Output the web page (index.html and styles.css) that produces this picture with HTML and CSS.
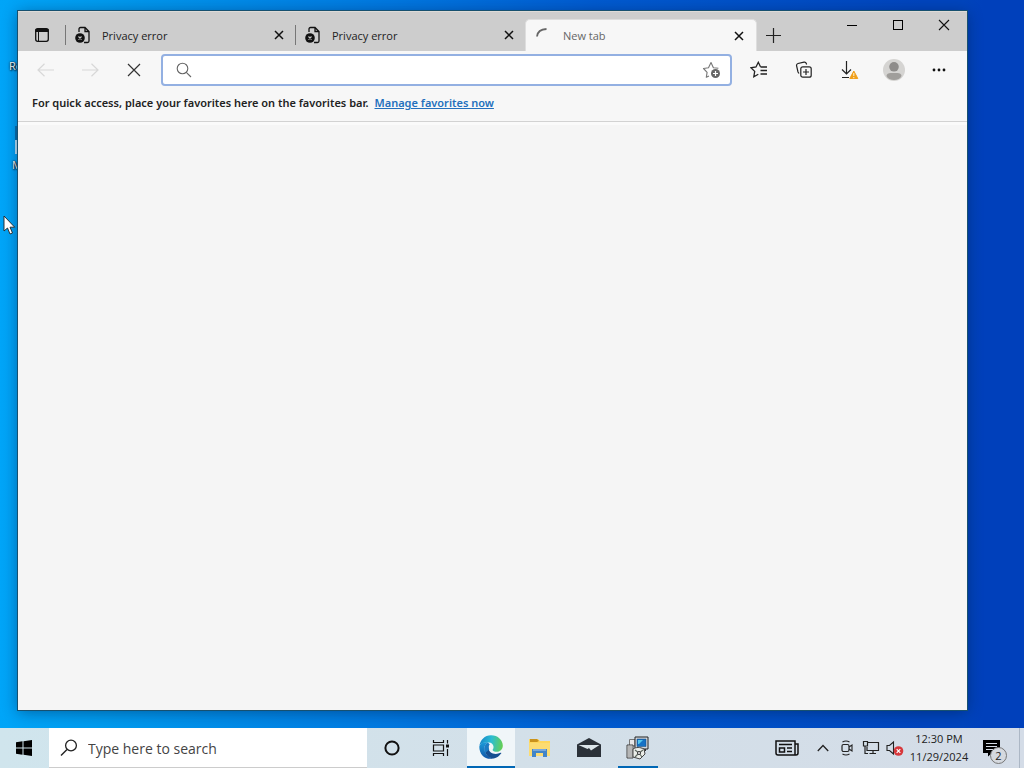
FILE: index.html
```html
<!DOCTYPE html>
<html lang="en">
<head>
<meta charset="utf-8">
<title>New tab</title>
<link rel="stylesheet" href="styles.css">
</head>
<body>
<div class="screen">
  <main class="desktop">
    <span class="shortcut shortcut-recycle">Recycle Bin</span>
    <span class="shortcut-icon"></span>
    <span class="shortcut shortcut-edge">Microsoft Edge</span>

    <section class="window">
      <header class="titlebar">
        <button class="tab-actions" aria-label="Tab actions">
          <svg width="16" height="16" viewBox="0 0 16 16"><rect x="1.7" y="1.7" width="12.6" height="12.6" rx="2" fill="none" stroke="#111" stroke-width="1.3"/><path d="M1.5 2h13v3H5v9.500H4V5H1.500z" fill="#111"/></svg>
        </button>
        <div class="tab">
          <svg width="18" height="18" viewBox="0 0 18 18"><path d="M5 6V3a1.500 1.500 0 0 1 1.500-1.500H11L15 5.500V15a1.500 1.500 0 0 1-1.500 1.500H10M11 1.500V5.500H15" fill="none" stroke="#111" stroke-width="1.3"/><circle cx="6" cy="12" r="4.800" fill="#111"/><path d="M4.500 10.500l3 3M7.500 10.500l-3 3" stroke="#ccc" stroke-width="1.100"/></svg>
          <span class="tab-title">Privacy error</span>
          <button class="tab-close" aria-label="Close tab"><svg width="10" height="10" viewBox="0 0 10 10"><path d="M1 1l8 8M9 1L1 9" stroke="#111" stroke-width="1.500"/></svg></button>
        </div>
        <div class="tab">
          <svg width="18" height="18" viewBox="0 0 18 18"><path d="M5 6V3a1.500 1.500 0 0 1 1.500-1.500H11L15 5.500V15a1.500 1.500 0 0 1-1.500 1.500H10M11 1.500V5.500H15" fill="none" stroke="#111" stroke-width="1.3"/><circle cx="6" cy="12" r="4.800" fill="#111"/><path d="M4.500 10.500l3 3M7.500 10.500l-3 3" stroke="#ccc" stroke-width="1.100"/></svg>
          <span class="tab-title">Privacy error</span>
          <button class="tab-close" aria-label="Close tab"><svg width="10" height="10" viewBox="0 0 10 10"><path d="M1 1l8 8M9 1L1 9" stroke="#111" stroke-width="1.500"/></svg></button>
        </div>
        <div class="tab tab-active">
          <svg width="18" height="18" viewBox="0 0 18 18"><path d="M2 9.500C2.500 5 6 2.200 11.500 2" fill="none" stroke="#666" stroke-width="1.800"/></svg>
          <span class="tab-title">New tab</span>
          <button class="tab-close" aria-label="Close tab"><svg width="10" height="10" viewBox="0 0 10 10"><path d="M1 1l8 8M9 1L1 9" stroke="#111" stroke-width="1.500"/></svg></button>
        </div>
        <button class="new-tab" aria-label="New tab"><svg width="15" height="15" viewBox="0 0 15 15"><path d="M7.500 0v15M0 7.500h15" stroke="#222" stroke-width="1.200"/></svg></button>
        <div class="window-controls">
          <button aria-label="Minimize"><svg width="12" height="12" viewBox="0 0 12 12"><path d="M1 6.500h10" stroke="#000"/></svg></button>
          <button aria-label="Maximize"><svg width="12" height="12" viewBox="0 0 12 12"><rect x="1.500" y="1.500" width="9" height="9" fill="none" stroke="#000"/></svg></button>
          <button aria-label="Close"><svg width="12" height="12" viewBox="0 0 12 12"><path d="M1 1l10 10M11 1L1 11" stroke="#111" stroke-width="1.100"/></svg></button>
        </div>
      </header>

      <nav class="toolbar">
        <button class="nav-button" aria-label="Back" disabled><svg width="18" height="14" viewBox="0 0 18 14"><path d="M17 7H1M7.500 .8L1 7l6.500 6.200" fill="none" stroke="#d8d8d8" stroke-width="1.200"/></svg></button>
        <button class="nav-button" aria-label="Forward" disabled><svg width="18" height="14" viewBox="0 0 18 14"><path d="M1 7h16M10.500 .8L17 7l-6.500 6.200" fill="none" stroke="#d8d8d8" stroke-width="1.200"/></svg></button>
        <button class="nav-button" aria-label="Stop loading"><svg width="14" height="14" viewBox="0 0 14 14"><path d="M1 1l12 12M13 1L1 13" stroke="#333" stroke-width="1.200"/></svg></button>
        <div class="address">
          <svg width="16" height="16" viewBox="0 0 16 16"><circle cx="6.500" cy="6.500" r="5.300" fill="none" stroke="#666" stroke-width="1.100"/><path d="M10.300 10.300L15 15" stroke="#666" stroke-width="1.100"/></svg>
          <input type="text" aria-label="Address and search bar">
          <button aria-label="Add this page to favorites"><svg width="20" height="18" viewBox="0 0 20 18"><path d="M7 15l-2.700 1.300.8-5L1.500 7.500l5-.8L9 1.500l2.400 5.200 5 .6" fill="none" stroke="#777" stroke-width="1.100" stroke-linejoin="round"/><circle cx="13.500" cy="12.500" r="4.500" fill="#666"/><path d="M13.500 10v5M11 12.500h5" stroke="#fff" stroke-width="1.200"/></svg></button>
        </div>
        <button class="tool-button" aria-label="Favorites"><svg width="18" height="18" viewBox="0 0 18 18"><path d="M10.500 5.800L8.300 1.300 6 6 1 6.800l3.700 3.600-.9 5.300 4.500-2.400M10.500 6H17M10.500 9.500H17M10.500 13H17" fill="none" stroke="#222" stroke-width="1.300"/></svg></button>
        <button class="tool-button" aria-label="Collections"><svg width="18" height="18" viewBox="0 0 18 18"><path d="M4 12.500L3 11 1.500 4.500a2 2 0 0 1 1.500-2l6-1.300a2 2 0 0 1 2.300 1.300l.3 1" fill="none" stroke="#222" stroke-width="1.200"/><rect x="5.800" y="5.800" width="10.400" height="10.400" rx="2" fill="none" stroke="#222" stroke-width="1.200"/><path d="M11 8v6M8 11h6" stroke="#222" stroke-width="1.200"/></svg></button>
        <button class="tool-button" aria-label="Downloads"><svg width="20" height="20" viewBox="0 0 20 20"><path d="M7.500 1v13M3 9.500l4.500 4.500L12 9.500M3 17.500h7" fill="none" stroke="#222" stroke-width="1.200"/><path d="M14.800 11l4 7.500h-8z" fill="#f0a01c" stroke="#f0a01c" stroke-linejoin="round"/><path d="M14.800 13v3M14.800 17v1.200" stroke="#fff3d8"/></svg></button>
        <button class="tool-button" aria-label="Profile"><svg width="22" height="22" viewBox="0 0 22 22"><circle cx="11" cy="11" r="11" fill="#d5d4d2"/><circle cx="11" cy="7.800" r="4.800" fill="#8e8c8a"/><path d="M3.500 17c0-2 2-3 4-3h7c2 0 4 1 4 3-1 2.500-4 4-7.500 4s-6.500-1.500-7.500-4z" fill="#a09e9b"/></svg></button>
        <button class="tool-button" aria-label="Settings and more"><svg width="14" height="4" viewBox="0 0 14 4"><g fill="#111"><circle cx="2" cy="2" r="1.400"/><circle cx="7" cy="2" r="1.400"/><circle cx="12" cy="2" r="1.400"/></g></svg></button>
      </nav>

      <div class="favorites-bar">
        <span>For quick access, place your favorites here on the favorites bar.</span>
        <a href="#">Manage favorites now</a>
      </div>
      <div class="page"></div>
    </section>

    <svg class="cursor" width="13" height="20" viewBox="0 0 13 20"><path d="M1 1v15l3.500-3 2.500 6 2.500-1-2.500-5.800h4.700z" fill="#fff" stroke="#222" stroke-width=".9"/></svg>
  </main>

  <footer class="taskbar">
    <button class="task" aria-label="Start"><svg width="16" height="16" viewBox="0 0 16 16"><path d="M0 2.300L6.500 1.300V7.500H0zM7.500 1.200L16 0v7.500H7.500zM0 8.500h6.500v6.200L0 13.700zM7.500 8.500H16V16l-8.500-1.200z" fill="#000"/></svg></button>
    <label class="search">
      <svg width="18" height="18" viewBox="0 0 18 18"><circle cx="11" cy="6.500" r="5.400" fill="none" stroke="#222" stroke-width="1.300"/><path d="M7 10.500L1 16.500" stroke="#222" stroke-width="1.400"/></svg>
      <input type="text" placeholder="Type here to search" aria-label="Type here to search">
    </label>
    <button class="task" aria-label="Cortana"><svg width="16" height="16" viewBox="0 0 16 16"><circle cx="8" cy="8" r="6.600" fill="none" stroke="#111" stroke-width="2"/></svg></button>
    <button class="task" aria-label="Task View"><svg width="18" height="16" viewBox="0 0 18 16"><path d="M1.500 0v2.500h10V0M1.500 16v-2.500h10V16M1.500 5h10v6h-10zM15.500 0v3.500M15.500 9v7" fill="none" stroke="#111" stroke-width="1.200"/><rect x="14" y="4.500" width="3" height="3" fill="#111"/></svg></button>
    <button class="task task-current" aria-label="Microsoft Edge"><svg width="24" height="24" viewBox="0 0 24 24">
      <defs><linearGradient id="edge-top" x1="0" y1=".4" x2="1" y2=".5"><stop offset="0" stop-color="#1785c9"/><stop offset=".5" stop-color="#2bbdd3"/><stop offset="1" stop-color="#65cf52"/></linearGradient><linearGradient id="edge-low" x1="0" y1="0" x2="0" y2="1"><stop offset="0" stop-color="#1b9ad8"/><stop offset="1" stop-color="#1257a8"/></linearGradient></defs>
      <path d="M.3 11.500C1 5 5.800.2 12 .2c7 0 11.800 5 11.800 10.300 0 4-3 6.300-6.300 6.300-3.200 0-4.500-1.400-3.500-2.700 1.200-1.600.8-6.100-4-6.600C5 7 1 8.500.3 11.500z" fill="url(#edge-top)"/>
      <path d="M.3 11.500C1.300 8.300 5 6.700 9 7.500c-3.500 2-4.500 5.500-3 9.300 1.300 3.500 4.500 6 8 6.800C6 25 .2 19.500.3 11.500z" fill="url(#edge-low)"/>
      <path d="M9.500 9.500C6.500 11 5 14 6.300 17.500c1.500 4 5 6.300 8.500 6 3-.6 5.700-2.500 7.500-5.200.3-.6-.2-.8-.7-.5-5.500 2.600-12.400.4-12.100-5.300z" fill="#154f91"/>
      <path d="M9 7.500c-4.300 2.300-4.500 7-2.700 10.300l4-3.300c-1.200-2-1-3.500.4-5z" fill="#1b7cc4"/>
    </svg></button>
    <button class="task" aria-label="File Explorer"><svg width="24" height="20" viewBox="0 0 24 20"><path d="M1 1h9l2 2h10v15H1z" fill="#ffd75c"/><path d="M2 1h7l2 2-2 1H2z" fill="#c9921c"/><path d="M1 5h21v13H1z" fill="#fcdc72"/><path d="M4 19v-8h15v8h-4v-4H8v4z" fill="#4285c8"/><path d="M5 11h13v2H5z" fill="#79a8dc"/></svg></button>
    <button class="task" aria-label="Mail"><svg width="26" height="20" viewBox="0 0 26 20"><path d="M1 6.500L13 0l12 6.500V19H1z" fill="#2b3138"/><path d="M2.500 7h21l-8.500 5.500-2-2.500-1.500 1z" fill="#dce5e9"/></svg></button>
    <button class="task task-open" aria-label="Installer"><svg width="24" height="24" viewBox="0 0 24 24"><path d="M3.500 3.500H9V10H3.500z" fill="#e8e8e8" stroke="#777"/><path d="M9 1h13v12H9z" fill="#d5d9df" stroke="#222"/><path d="M11 3h9v7.500h-9z" fill="#1672c5" stroke="#174675" stroke-width=".5"/><path d="M12 4h5l-4 4h-1z" fill="#54c7ee"/><path d="M13 13h7v2h-7z" fill="#333"/><path d="M1 9h6v13H1z" fill="#e3e4e4" stroke="#444"/><path d="M3 10v11M5 10v11" stroke="#888"/><path d="M7 13c3-2 7-2 11 0l1 5-5 5-7-2z" fill="#eceee9" stroke="#444"/><path d="M9 14l4 3 4-3M13 17l3 4M13 17l-4 4" fill="none" stroke="#626b63" stroke-width="1.200"/><circle cx="13" cy="17" r="1.500" fill="#fff" stroke="#333"/></svg></button>
    <div class="tray">
      <button class="tray-news" aria-label="News and interests"><svg width="24" height="16" viewBox="0 0 24 16"><path d="M1 1h19v14H3a2 2 0 0 1-2-2zM20 4h3v9a2 2 0 0 1-2 2h-2M4 4.500h13M12 8h5M12 11.500h5M4.500 8h5v4h-5z" fill="none" stroke="#111" stroke-width="1.500"/></svg></button>
      <button class="tray-item" aria-label="Show hidden icons"><svg width="12" height="8" viewBox="0 0 12 8"><path d="M.8 7L6 1.500 11.200 7" fill="none" stroke="#222" stroke-width="1.300"/></svg></button>
      <button class="tray-item" aria-label="Meet Now"><svg width="14" height="16" viewBox="0 0 14 16"><rect x="2" y="4.500" width="7" height="7" rx="1.500" fill="none" stroke="#222" stroke-width="1.200"/><path d="M9 7l3-2v6L9 9M2.500 2Q6 0 9.500 2M2.500 14Q6 16 9.500 14" fill="none" stroke="#222" stroke-width="1.100"/></svg></button>
      <button class="tray-item" aria-label="Network"><svg width="18" height="16" viewBox="0 0 18 16"><path d="M6 2.500h10.500v8H5V7M11 10.500v3M7.500 13.500H14M3 6v7.500h3" fill="none" stroke="#222" stroke-width="1.200"/><path d="M1.500 1.500h4V6h-4z" fill="#d4dfe8" stroke="#222" stroke-width="1.200"/></svg></button>
      <button class="tray-item" aria-label="Volume, muted"><svg width="18" height="16" viewBox="0 0 18 16"><path d="M1 5.500h2.500L7.500 2v12L3.500 10.500H1z" fill="none" stroke="#222" stroke-width="1.100"/><circle cx="12.500" cy="11" r="4.800" fill="#d7383c"/><path d="M10.700 9.200l3.600 3.600M14.300 9.200l-3.600 3.600" stroke="#fff" stroke-width="1.200"/></svg></button>
      <button class="clock"><span>12:30 PM</span><span>11/29/2024</span></button>
      <button class="notifications" aria-label="2 new notifications"><svg width="17" height="17" viewBox="0 0 17 17"><path d="M0 0h17v13H9l-4 3.500V13H0z" fill="#000"/><path d="M3 3.500h11M3 6.500h11M3 9.500h7" stroke="#d5dce5"/></svg><span class="badge">2</span></button>
      <button class="show-desktop" aria-label="Show desktop"></button>
    </div>
  </footer>
</div>
</body>
</html>
```

FILE: styles.css
```css
* {
  box-sizing: border-box;
}

body {
  margin: 0;
  font-family: "Open Sans", "Noto Sans", sans-serif;
  font-size: 11px;
  color: #222;
}

button {
  display: flex;
  align-items: center;
  justify-content: center;
  flex-shrink: 0;
  padding: 0;
  border: 0;
  background: transparent;
  color: inherit;
  font: inherit;
}

input {
  flex: 1;
  min-width: 0;
  padding: 0;
  border: 0;
  outline: 0;
  background: transparent;
  font: inherit;
}

svg {
  display: block;
  flex-shrink: 0;
}

.screen {
  display: flex;
  flex-direction: column;
  height: 100vh;
  overflow: hidden;
}

.desktop {
  position: relative;
  display: flex;
  flex: 1;
  min-height: 0;
  padding: 11px 57px 18px 18px;
  background:
    linear-gradient(90deg, transparent 94%, #0040bb 96%),
    linear-gradient(90deg, #00a5f8 0, #009bee 10%, #0078e0 38%, #005bd0 58%, #0045bd 90%);
}

.shortcut,
.shortcut-icon,
.cursor {
  position: absolute;
}

.shortcut {
  color: #fff;
  text-shadow: 1px 1px 2px #000, 0 0 2px #000;
  white-space: nowrap;
}

.shortcut-recycle {
  left: 9px;
  top: 58px;
}

.shortcut-edge {
  left: 12px;
  top: 157px;
}

.shortcut-icon {
  left: 15px;
  top: 126px;
  width: 24px;
  height: 28px;
  border-top: 14px solid #0870ad;
  background: #b8e2f5;
}

.cursor {
  left: 3px;
  top: 215px;
}

.window {
  position: relative;
  display: flex;
  flex: 1;
  flex-direction: column;
  min-width: 0;
  background: #f5f5f5;
  box-shadow: 0 0 0 1px #17506f, 0 2px 14px rgba(0, 20, 60, 0.45);
}

.titlebar {
  display: flex;
  align-items: flex-end;
  height: 40px;
  border-top: 1px solid #dedbd7;
  background: #cdcdcd;
}

.tab-actions {
  width: 47px;
  height: 32px;
}

.tab {
  display: flex;
  align-items: center;
  flex: 0 1 230px;
  min-width: 0;
  height: 32px;
  padding: 0 10px 0 9px;
  background: linear-gradient(#777, #777) left center / 1px 20px no-repeat;
}

.tab-title {
  flex: 1;
  margin-left: 10px;
  overflow: hidden;
  white-space: nowrap;
}

.tab-close {
  width: 12px;
  height: 20px;
}

.tab-active {
  flex-basis: 232px;
  padding-right: 11px;
  border: 1px solid #dedede;
  border-bottom: 0;
  border-radius: 5px 5px 0 0;
  background: #f7f7f7;
  color: #666;
}

.new-tab {
  width: 33px;
  height: 32px;
}

.window-controls {
  display: flex;
  align-self: flex-start;
  margin-left: auto;
}

.window-controls button {
  width: 46px;
  height: 26px;
}

.toolbar {
  display: flex;
  align-items: center;
  height: 38px;
  padding: 0 6px;
  background: #f7f7f7;
}

.nav-button {
  width: 44px;
  height: 32px;
}

.tool-button {
  width: 45px;
  height: 32px;
}

.address {
  display: flex;
  align-items: center;
  flex: 1;
  min-width: 0;
  height: 32px;
  margin: 0 4px 0 5px;
  padding: 0 8px 0 13px;
  border: 2px solid #93b0e2;
  border-radius: 4px;
  background: #fff;
}

.favorites-bar {
  display: flex;
  gap: 6px;
  height: 33px;
  padding: 6px 14px 0;
  border-bottom: 1px solid #d2d2d2;
  background: #f7f7f7;
  font-family: "Noto Sans", "Open Sans", sans-serif;
  font-weight: 600;
  line-height: 16px;
}

.favorites-bar a {
  color: #2470bd;
  text-decoration: underline;
}

.page {
  flex: 1;
  border-top: 3px solid #fafafa;
  background: #f5f5f5;
}

.taskbar {
  display: flex;
  height: 40px;
  background: linear-gradient(90deg, #d0e5ed, #d3e0e9 50%, #d4dce7);
}

.task {
  width: 48px;
  margin-right: 1px;
}

.task-current {
  margin-left: 1px;
  border-bottom: 2px solid #0067b5;
  background: #f0f6f9;
}

.task-open {
  background: linear-gradient(#0067b5, #0067b5) center bottom / 40px 2px no-repeat;
}

.search {
  display: flex;
  align-items: center;
  flex: 0 1 318px;
  min-width: 0;
  margin-right: 1px;
  padding: 1px 11px 0;
  border-bottom: 1px solid #ccc;
  background: #fff;
  font-size: 14px;
}

.search input {
  margin-left: 10px;
}

.search input::placeholder {
  color: #444;
  opacity: 1;
}

.tray {
  display: flex;
  margin-left: auto;
}

.tray-news {
  width: 48px;
}

.tray-item {
  width: 24px;
}

.clock {
  flex-direction: column;
  width: 64px;
  line-height: 18px;
}

.notifications {
  position: relative;
  width: 48px;
  padding-right: 8px;
}

.badge {
  position: absolute;
  right: 12px;
  bottom: 4px;
  width: 17px;
  height: 17px;
  border: 1px solid #777;
  border-radius: 50%;
  background: #d5d9df;
  line-height: 15px;
}

.show-desktop {
  width: 5px;
  border-left: 1px solid #acb7c5;
}
```
